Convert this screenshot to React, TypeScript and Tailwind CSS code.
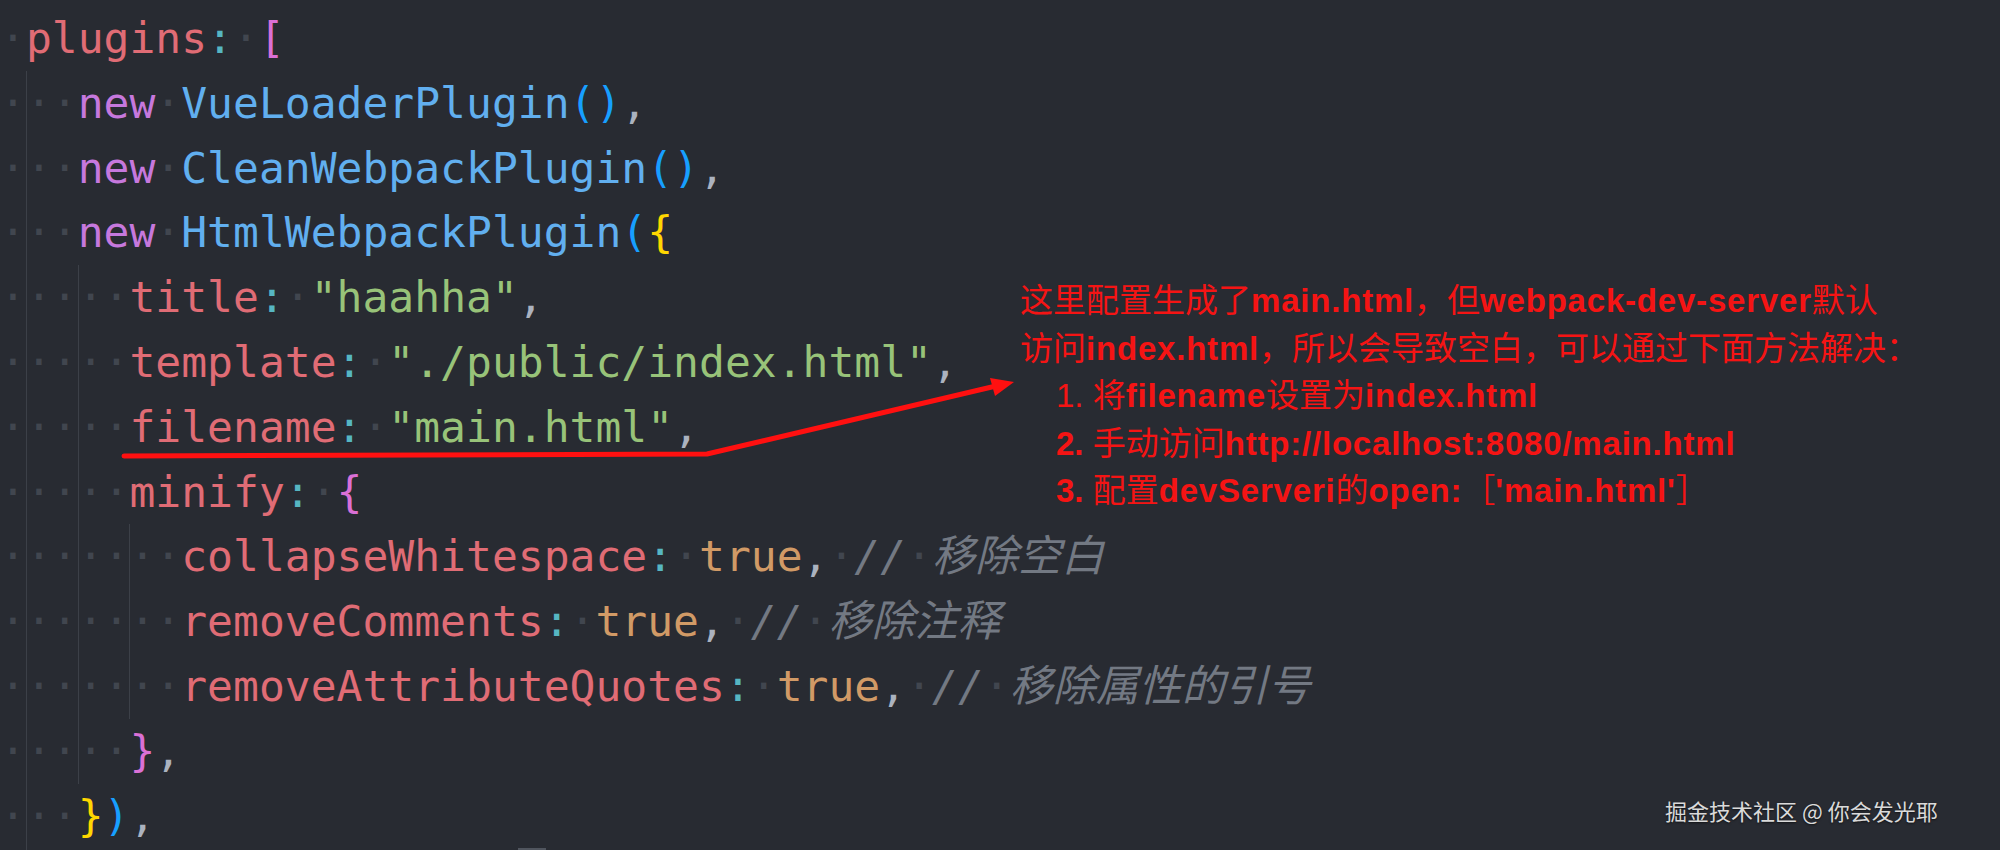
type Tok = [string, string];

const red = "text-[#e06c75]";
const purple = "text-[#c678dd]";
const blue = "text-[#61afef]";
const paren = "text-[#179fff]";
const gold = "text-[#ffd700]";
const orchid = "text-[#da70d6]";
const cyan = "text-[#56b6c2]";
const green = "text-[#98c379]";
const orange = "text-[#d19a66]";
const punct = "text-[#abb2bf]";
const comment = "text-[#737983] italic";
const S: Tok = [" ", ""];

const rows: { indent: number; guides: number[]; toks: Tok[] }[] = [
  { indent: 1, guides: [], toks: [["plugins", red], [":", cyan], S, ["[", orchid]] },
  { indent: 3, guides: [1], toks: [["new", purple], S, ["VueLoaderPlugin", blue], ["()", paren], [",", punct]] },
  { indent: 3, guides: [1], toks: [["new", purple], S, ["CleanWebpackPlugin", blue], ["()", paren], [",", punct]] },
  { indent: 3, guides: [1], toks: [["new", purple], S, ["HtmlWebpackPlugin", blue], ["(", paren], ["{", gold]] },
  { indent: 5, guides: [1, 3], toks: [["title", red], [":", cyan], S, ['"haahha"', green], [",", punct]] },
  { indent: 5, guides: [1, 3], toks: [["template", red], [":", cyan], S, ['"./public/index.html"', green], [",", punct]] },
  { indent: 5, guides: [1, 3], toks: [["filename", red], [":", cyan], S, ['"main.html"', green], [",", punct]] },
  { indent: 5, guides: [1, 3], toks: [["minify", red], [":", cyan], S, ["{", orchid]] },
  {
    indent: 7,
    guides: [1, 3, 5],
    toks: [["collapseWhitespace", red], [":", cyan], S, ["true", orange], [",", punct], S, ["//", comment], S, ["移除空白", comment]],
  },
  {
    indent: 7,
    guides: [1, 3, 5],
    toks: [["removeComments", red], [":", cyan], S, ["true", orange], [",", punct], S, ["//", comment], S, ["移除注释", comment]],
  },
  {
    indent: 7,
    guides: [1, 3, 5],
    toks: [["removeAttributeQuotes", red], [":", cyan], S, ["true", orange], [",", punct], S, ["//", comment], S, ["移除属性的引号", comment]],
  },
  { indent: 5, guides: [1, 3], toks: [["}", orchid], [",", punct]] },
  { indent: 3, guides: [1], toks: [["}", gold], [")", paren], [",", punct]] },
];

function Row({ indent, guides, toks }: { indent: number; guides: number[]; toks: Tok[] }) {
  return (
    <div className="flex h-[64.8px] leading-[64.8px] whitespace-pre">
      {Array.from({ length: indent }).map((_, c) => (
        <span
          key={c}
          className={guides.includes(c) ? "text-[#41464f] shadow-[inset_1px_0_0_#3c4048]" : "text-[#41464f]"}
        >
          ·
        </span>
      ))}
      {toks.map(([t, cls], i) =>
        t === " " ? (
          <span key={i} className="text-[#41464f]">
            ·
          </span>
        ) : (
          <span key={i} className={cls}>
            {t}
          </span>
        )
      )}
    </div>
  );
}

export default function App() {
  return (
    <div className="relative w-[2000px] h-[850px] overflow-hidden bg-[#282b32]">
      {/* editor */}
      <div className="pt-[6px] text-[43px] font-['DejaVu_Sans_Mono','Noto_Sans_CJK_SC',monospace]">
        {rows.map((r, i) => (
          <Row key={i} {...r} />
        ))}
        {/* next line, only its top edge is visible */}
        <div className="flex h-[64.8px]">
          <span className="w-[26px]" />
          <span className="w-[26px] shadow-[inset_1px_0_0_#3c4048]" />
          <span className="w-[466px]" />
          <span className="w-[28px] h-[4px] bg-[#50555e]" />
        </div>
      </div>

      {/* red markup */}
      <svg className="absolute left-0 top-0" width="2000" height="850" viewBox="0 0 2000 850">
        <polyline
          points="124,456 707,454 996,386"
          fill="none"
          stroke="#ff1010"
          strokeWidth="5"
          strokeLinejoin="round"
          strokeLinecap="round"
        />
        <polygon points="1014,382 995,396 990,378" fill="#ff1010" />
      </svg>

      <div className="absolute left-[1020px] top-[277px] text-[33px] leading-[47.5px] text-[#f51414] whitespace-nowrap font-['Liberation_Sans','Noto_Sans_CJK_SC',sans-serif]">
        <div>
          这里配置生成了<b className="tracking-[0.8px]">main.html</b>，但
          <b className="tracking-[0.8px]">webpack-dev-server</b>默认
        </div>
        <div>
          访问<b className="tracking-[0.8px]">index.html</b>，所以会导致空白，可以通过下面方法解决：
        </div>
        <div className="pl-[36px]">
          1. 将<b className="tracking-[0.8px]">filename</b>设置为<b className="tracking-[0.8px]">index.html</b>
        </div>
        <div className="pl-[36px]">
          <b>2.</b> 手动访问<b className="tracking-[0.8px]">http://localhost:8080/main.html</b>
        </div>
        <div className="pl-[36px]">
          <b>3.</b> 配置<b className="tracking-[0.8px]">devServeri</b>的<b className="tracking-[0.8px]">open:</b>［
          <b className="tracking-[0.8px]">'main.html'</b>］
        </div>
      </div>

      {/* watermark */}
      <div className="absolute left-[1665px] top-[795px] text-[22px] leading-[30px] text-[#dadada] whitespace-nowrap font-['Noto_Sans_CJK_SC',sans-serif] [text-shadow:0_1px_2px_rgba(0,0,0,0.6)]">
        掘金技术社区 @ 你会发光耶
      </div>
    </div>
  );
}
